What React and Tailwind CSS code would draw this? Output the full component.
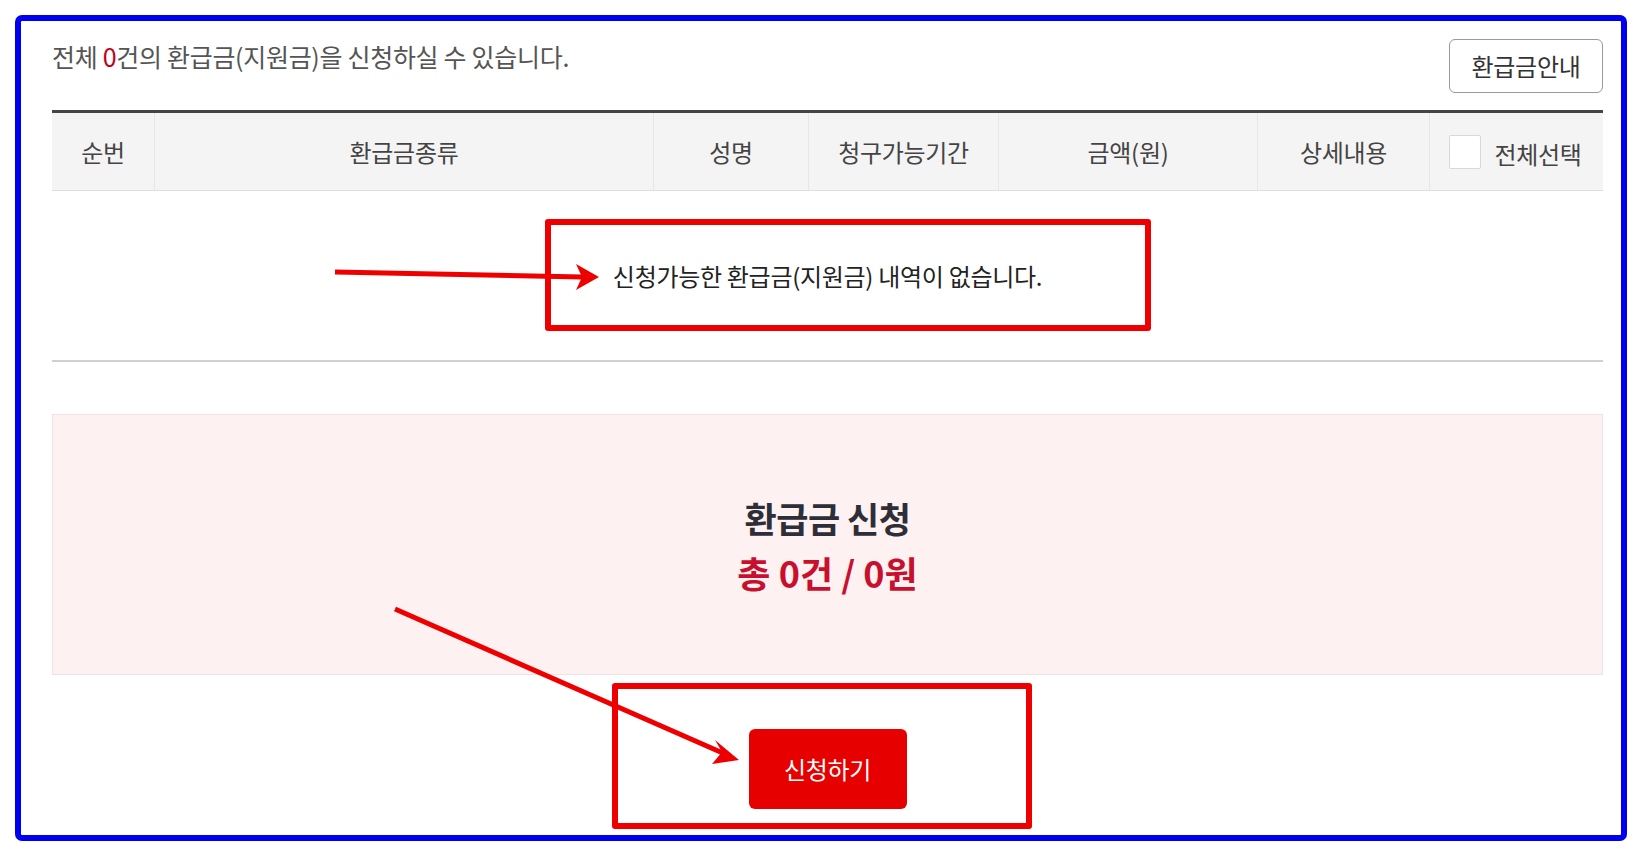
import React from "react";

const font = { fontFamily: '"Noto Sans CJK KR", "Noto Sans", sans-serif' };

const cols = [
  { label: "순번", w: "w-[103px]" },
  { label: "환급금종류", w: "w-[499px]" },
  { label: "성명", w: "w-[155px]" },
  { label: "청구가능기간", w: "w-[190px]" },
  { label: "금액(원)", w: "w-[259px]" },
  { label: "상세내용", w: "w-[172px]" },
];

export default function App() {
  return (
    <div
      className="relative w-[1643px] h-[857px] bg-white overflow-hidden"
      style={font}
    >
      <div className="ml-[15px] mt-[15px] w-[1612px] h-[826px] border-[6px] border-[#0000f0] rounded-[7px] pl-[31px] pr-[18px]">
        {/* top row */}
        <div className="flex items-start justify-between pt-[18px]">
          <p className="mt-[2px] text-[25px] leading-[30px] text-[#555] tracking-[-0.3px]">
            전체 <span className="text-[#c00018]">0</span>건의 환급금(지원금)을 신청하실 수 있습니다.
          </p>
          <button className="w-[154px] h-[54px] border border-[#9a9a9a] rounded-[6px] text-[24px] text-[#333] bg-white tracking-[-0.3px]">
            환급금안내
          </button>
        </div>

        {/* table */}
        <div className="mt-[17px] border-t-[3px] border-[#444]">
          <div className="flex h-[78px] bg-[#f4f4f4] border-b border-[#dedede] text-[24px] text-[#444] tracking-[-0.3px]">
            {cols.map((c) => (
              <div
                key={c.label}
                className={`${c.w} flex items-center justify-center border-r border-[#e6e6e6]`}
              >
                {c.label}
              </div>
            ))}
            <div className="flex-1 flex items-center justify-center gap-[13px] pr-[2px]">
              <span className="w-[32px] h-[34px] bg-white border border-[#d8d8d8] rounded-[2px]" />
              <span className="mt-[4px]">전체선택</span>
            </div>
          </div>
          <div className="h-[171px] flex items-center justify-center border-b-2 border-[#d0d0d0] text-[24px] text-[#222] tracking-[-0.3px]">
            신청가능한 환급금(지원금) 내역이 없습니다.
          </div>
        </div>

        {/* summary */}
        <div className="mt-[52px] h-[261px] bg-[#fdf1f1] border border-[#f1e2e2] flex flex-col items-center justify-center">
          <div className="text-[35px] leading-[54px] font-bold text-[#2e2e38] tracking-[-0.5px]">
            환급금 신청
          </div>
          <div className="text-[36px] leading-[54px] font-bold text-[#c8102e]">
            총 0건 / 0원
          </div>
        </div>

        <div className="mt-[54px] flex justify-center">
          <button className="w-[158px] h-[80px] rounded-[6px] bg-[#e60000] text-white text-[24px] tracking-[-0.3px]">
            신청하기
          </button>
        </div>
      </div>

      {/* annotation boxes */}
      <div className="absolute left-[545px] top-[219px] w-[606px] h-[112px] border-[6px] border-[#ee0000] rounded-[3px]" />
      <div className="absolute left-[612px] top-[683px] w-[420px] h-[146px] border-[6px] border-[#ee0000] rounded-[3px]" />

      {/* arrows */}
      <svg
        className="absolute left-0 top-0 pointer-events-none"
        width="1643"
        height="857"
        viewBox="0 0 1643 857"
      >
        <line x1="335" y1="272" x2="582" y2="277" stroke="#ee0000" strokeWidth="5" />
        <polygon points="599,277 576,264 582,277 576,290" fill="#ee0000" />
        <line x1="395" y1="609" x2="725" y2="754" stroke="#ee0000" strokeWidth="5" />
        <polygon points="739,760 715,740 722,752 712,764" fill="#ee0000" />
      </svg>
    </div>
  );
}
